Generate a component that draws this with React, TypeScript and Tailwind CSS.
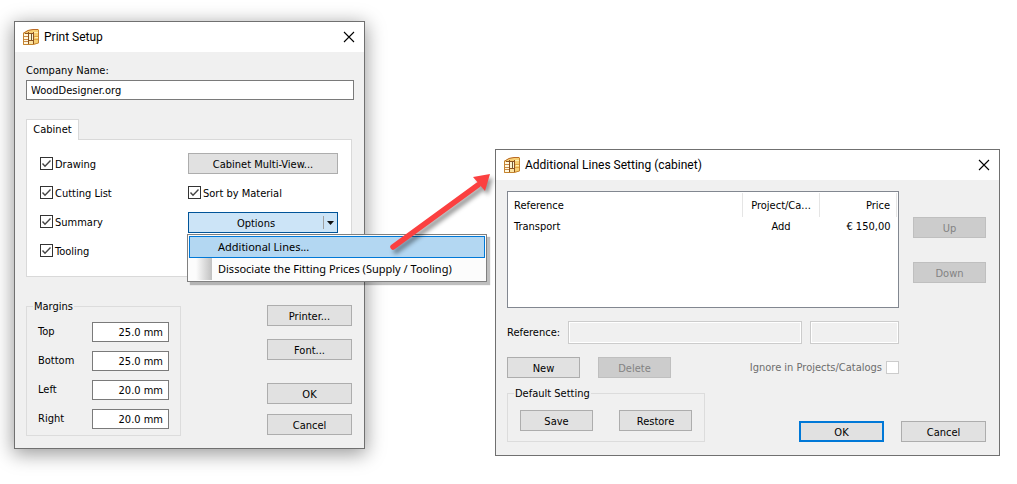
import React from "react";
import clsx from "clsx";

type ButtonProps = React.ButtonHTMLAttributes<HTMLButtonElement> & {
  primary?: boolean;
};

function Button({ primary, className, ...props }: ButtonProps) {
  return (
    <button
      type="button"
      className={clsx(
        "h-[21px] pt-0.5 leading-[15px] text-center",
        primary ? "border-2 border-[#0078d7]" : "border",
        !primary && (props.disabled ? "border-[#bfbfbf]" : "border-[#adadad]"),
        props.disabled ? "bg-[#cccccc] text-[#838383]" : "bg-[#e1e1e1]",
        className
      )}
      {...props}
    />
  );
}

function CabinetIcon() {
  return (
    <svg className="w-4 h-4" viewBox="0 0 16 16" aria-hidden="true">
      <path d="M0 4 5 1 10 0H16V14L10 16H0Z" fill="#f7cf72" />
      <path d="M1 5h4v2H1zM1 8h4v2H1zM1 11h4v1H1zM1 13h4v2H1z" fill="#fff8e0" />
      <path d="M6 5h2v6H6zM9 5h1v6H9z" fill="#fdf3cf" />
      <path d="M6 12h4v3H6z" fill="#fbe3a0" />
      <path d="M0 4.5 5 1.5 10 0.5H15" fill="none" stroke="#b8692a" />
      <path d="M0.5 4V15.5H10L15.5 14V1" fill="none" stroke="#c4832f" />
      <path d="M1 7.5H5M1 10.5H5M1 12.5H5" stroke="#c98a48" />
      <path d="M2 4.5H10M5.5 3V15M5.5 11.5H10" fill="none" stroke="#8d531f" />
      <path d="M8.5 5V11" stroke="#6e5a36" />
      <path d="M10.5 3V15" stroke="#8d531f" />
      <path d="M11 7.5H15M11 10.5H15" stroke="#dfa544" />
      <path d="M11 3.5H15M12 8.5H15" stroke="#fff0b0" />
    </svg>
  );
}

function TitleBar({ title }: { title: string }) {
  return (
    <header className="h-[30px] pl-2 pr-[9px] flex items-center bg-white font-[Roboto,sans-serif] text-[12px]">
      <CabinetIcon />
      <h1 className="pl-[5px] flex-grow">{title}</h1>
      <button type="button" aria-label="Close">
        <svg className="w-3 h-3" viewBox="0 0 12 12">
          <path d="M1 1 11 11M11 1 1 11" stroke="#000" strokeWidth="1.1" />
        </svg>
      </button>
    </header>
  );
}

function Checkbox({ label }: { label: string }) {
  return (
    <label className="h-[14px] flex gap-0.5 leading-4">
      <span className="relative w-[13px] h-[13px]">
        <input
          type="checkbox"
          defaultChecked
          className="peer appearance-none block w-[13px] h-[13px] border border-[#333333] bg-white"
        />
        <svg
          className="absolute inset-0 hidden peer-checked:block pointer-events-none"
          viewBox="0 0 13 13"
        >
          <path
            d="M2.5 6.5 5 9.2 10.5 3.6"
            fill="none"
            stroke="#444"
            strokeWidth="1.4"
          />
        </svg>
      </span>
      {label}
    </label>
  );
}

function Group({
  title,
  children,
}: {
  title: string;
  children: React.ReactNode;
}) {
  return (
    <fieldset className="border border-[#dcdcdc] px-[6px]">
      <legend className="px-px h-[14px] leading-4">{title}</legend>
      {children}
    </fieldset>
  );
}

const margins = [
  { name: "Top", value: "25.0 mm" },
  { name: "Bottom", value: "25.0 mm" },
  { name: "Left", value: "20.0 mm" },
  { name: "Right", value: "20.0 mm" },
];

function OptionsMenu() {
  return (
    <div className="relative">
      <button
        type="button"
        aria-haspopup="menu"
        className="w-full h-[21px] flex items-center border border-[#005499] bg-[#cce4f7] leading-[15px]"
      >
        <span className="flex-grow pt-0.5 text-center">Options</span>
        <span className="w-[14px] h-[13px] flex items-center justify-center border-l border-[#a0a0a0]">
          <svg className="w-[7px] h-1" viewBox="0 0 7 4">
            <path d="M0 0H7L3.5 4Z" fill="#111" />
          </svg>
        </span>
      </button>
      <div
        role="menu"
        className="absolute z-10 top-[22px] -left-px w-[300px] p-px border border-[#808080] bg-[#fcfcfc] shadow-[3px_3px_1px_rgba(0,0,0,0.25)] text-[11px] font-['Noto_Sans',sans-serif] whitespace-nowrap"
      >
        <button
          type="button"
          role="menuitem"
          className="w-full h-[22px] pl-7 flex items-center border border-[#0078d7] bg-[#b3d7f2]"
        >
          Additional Lines...
        </button>
        <button
          type="button"
          role="menuitem"
          className="w-full h-[22px] flex items-center gap-[6px]"
        >
          <span className="w-4 h-full ml-[7px] bg-linear-to-r from-[#fcfcfc] to-[#c0c0c0]" />
          Dissociate the Fitting Prices (Supply / Tooling)
        </button>
      </div>
    </div>
  );
}

function PrintSetup() {
  return (
    <section className="border border-[#707070] bg-[#f0f0f0] shadow-[0_4px_18px_1px_rgba(0,0,0,0.4)]">
      <TitleBar title="Print Setup" />
      <div className="pt-[10px] pb-3 pl-[11px] pr-[10px]">
        <label htmlFor="company" className="block h-[18px] leading-[18px]">
          Company Name:
        </label>
        <input
          id="company"
          defaultValue="WoodDesigner.org"
          className="block w-full h-5 px-1 border border-[#7a7a7a] bg-white"
        />
        <div className="pt-[19px] pr-0.5">
          <button
            type="button"
            role="tab"
            className="relative block w-[53px] h-[21px] -mb-px border border-b-0 border-[#d9d9d9] bg-white"
          >
            Cabinet
          </button>
          <div
            role="tabpanel"
            className="h-[138px] pt-[9px] px-[13px] grid grid-cols-[148px_1fr] border border-[#d9d9d9] bg-white"
          >
            <div className="pt-2 flex flex-col gap-[15px]">
              <Checkbox label="Drawing" />
              <Checkbox label="Cutting List" />
              <Checkbox label="Summary" />
              <Checkbox label="Tooling" />
            </div>
            <div className="pt-1 flex flex-col gap-3">
              <Button>Cabinet Multi-View...</Button>
              <Checkbox label="Sort by Material" />
              <OptionsMenu />
            </div>
          </div>
          <div className="pt-[22px] flex justify-between">
            <Group title="Margins">
              <div className="pt-[9px] pb-[6px] px-[5px] flex flex-col gap-[9px]">
                {margins.map(({ name, value }) => (
                  <label key={name} className="flex items-center">
                    <span className="w-[54px]">{name}</span>
                    <input
                      defaultValue={value}
                      className="w-[77px] h-5 px-[5px] border border-[#7a7a7a] bg-white text-right"
                    />
                  </label>
                ))}
              </div>
            </Group>
            <div className="w-[85px] pt-[6px] flex flex-col">
              <Button>Printer...</Button>
              <Button className="mt-[13px]">Font...</Button>
              <Button className="mt-[23px]">OK</Button>
              <Button className="mt-[10px]">Cancel</Button>
            </div>
          </div>
        </div>
      </div>
    </section>
  );
}

function Arrow() {
  return (
    <svg
      className="absolute z-20 right-full top-[15px] w-[120px] h-[100px] overflow-visible pointer-events-none drop-shadow-[3px_4px_2px_rgba(0,0,0,0.4)]"
      viewBox="0 0 120 100"
      aria-hidden="true"
    >
      <path
        d="M17 82 102 20"
        stroke="#fb4040"
        strokeWidth="5.5"
        strokeLinecap="round"
      />
      <path d="M114 9 97 12 109 26Z" fill="#fb4040" />
    </svg>
  );
}

function AdditionalLines() {
  return (
    <section className="relative border border-[#707070] bg-[#f0f0f0]">
      <Arrow />
      <TitleBar title="Additional Lines Setting (cabinet)" />
      <div className="pt-[11px] pb-[13px] pl-[11px] pr-[13px]">
        <div className="flex gap-[14px]">
          <div className="flex-1 min-w-0 h-[117px] pt-px pr-px border border-[#828790] bg-white">
            <table className="w-full table-fixed">
              <thead>
                <tr className="h-6">
                  <th className="pt-0.5 pl-[6px] border-r border-[#e5e5e5] font-normal text-left">
                    Reference
                  </th>
                  <th className="w-[77px] pt-0.5 border-r border-[#e5e5e5] font-normal text-center">
                    Project/Ca...
                  </th>
                  <th className="w-[77px] pt-0.5 pr-[6px] border-r border-[#e5e5e5] font-normal text-right">
                    Price
                  </th>
                </tr>
              </thead>
              <tbody>
                <tr>
                  <td className="pt-0.5 pl-[6px]">Transport</td>
                  <td className="pt-0.5 text-center">Add</td>
                  <td className="pt-0.5 pr-[6px] text-right">€ 150,00</td>
                </tr>
              </tbody>
            </table>
          </div>
          <div className="w-[73px] shrink-0 pt-[26px] flex flex-col gap-6">
            <Button disabled>Up</Button>
            <Button disabled>Down</Button>
          </div>
        </div>
        <div className="pt-[13px] pr-[87px]">
          <div className="flex items-center">
            <label htmlFor="reference" className="w-[61px]">
              Reference:
            </label>
            <input
              id="reference"
              disabled
              className="flex-grow min-w-0 h-[23px] border border-[#cccccc] shadow-[inset_0_0_0_1px_#fff]"
            />
            <input
              aria-label="Price"
              disabled
              className="w-[89px] h-[23px] ml-2 border border-[#cccccc] shadow-[inset_0_0_0_1px_#fff]"
            />
          </div>
          <div className="pt-[13px] flex items-center">
            <Button className="w-[73px]">New</Button>
            <Button className="w-[73px] ml-[18px]" disabled>
              Delete
            </Button>
            <label className="ml-auto flex items-center gap-1 text-[#6d6d6d]">
              Ignore in Projects/Catalogs
              <input
                type="checkbox"
                disabled
                className="appearance-none w-[13px] h-[13px] border border-[#cccccc] bg-white"
              />
            </label>
          </div>
        </div>
        <div className="pt-2 flex justify-between items-end">
          <Group title="Default Setting">
            <div className="py-[10px] px-[6px] flex gap-[26px]">
              <Button className="w-[73px]">Save</Button>
              <Button className="w-[73px]">Restore</Button>
            </div>
          </Group>
          <div className="flex gap-[17px]">
            <Button className="w-[85px]" primary>
              OK
            </Button>
            <Button className="w-[85px]">Cancel</Button>
          </div>
        </div>
      </div>
    </section>
  );
}

export default function App() {
  return (
    <main className="min-h-screen pt-[21px] pl-[14px] pr-[17px] grid grid-cols-[351fr_505fr] gap-[130px] items-start bg-white text-black text-[11px] leading-4 font-['DejaVu_Sans_Condensed','DejaVu_Sans',sans-serif]">
      <PrintSetup />
      <div className="pt-32">
        <AdditionalLines />
      </div>
    </main>
  );
}
